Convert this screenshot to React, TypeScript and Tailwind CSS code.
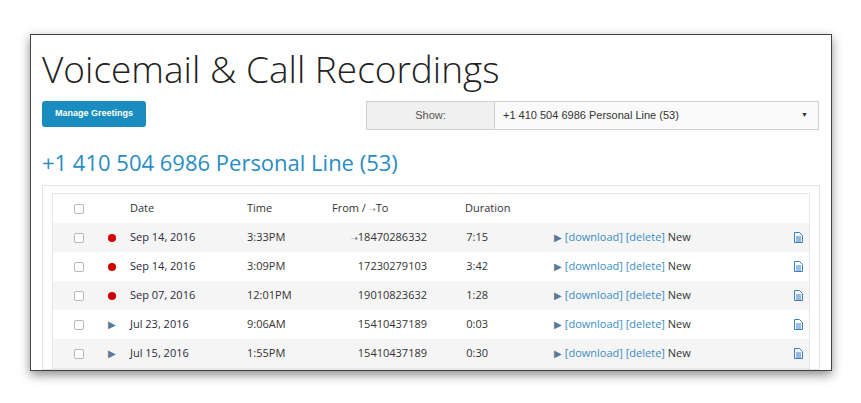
import React from "react";

const rows = [
  { rec: true, date: "Sep 14, 2016", time: "3:33PM", num: "18470286332", out: true, dur: "7:15", shade: true },
  { rec: true, date: "Sep 14, 2016", time: "3:09PM", num: "17230279103", out: false, dur: "3:42", shade: false },
  { rec: true, date: "Sep 07, 2016", time: "12:01PM", num: "19010823632", out: false, dur: "1:28", shade: true },
  { rec: false, date: "Jul 23, 2016", time: "9:06AM", num: "15410437189", out: false, dur: "0:03", shade: false },
  { rec: false, date: "Jul 15, 2016", time: "1:55PM", num: "15410437189", out: false, dur: "0:30", shade: true },
];

function Box() {
  return <span className="block h-[10px] w-[10px] rounded-[2px] border border-[#b8b8b8] bg-white" />;
}

function DocIcon() {
  return (
    <svg width="9" height="11" viewBox="0 0 9 11">
      <path d="M0.5 0.5h5l3 3v7h-8z" fill="none" stroke="#3a7fc4" strokeWidth="1" />
      <path d="M2 5h5M2 7h5M2 9h5" stroke="#3a7fc4" strokeWidth="1" />
    </svg>
  );
}

export default function App() {
  return (
    <div className="h-[403px] w-[861px] bg-white pl-[30px] pt-[34px]" style={{ fontFamily: '"Open Sans", sans-serif' }}>
      <div className="h-[337px] w-[802px] overflow-hidden border border-[#444] bg-white shadow-[0_4px_10px_rgba(0,0,0,0.45)]">
        <div className="px-[11px]">
          <h1 className="mt-[12px] text-[37px] font-light leading-[44px] text-[#222]">Voicemail &amp; Call Recordings</h1>
          <div className="mt-[10px] flex items-start justify-between pr-[1px]">
            <button className="h-[26px] w-[104px] rounded-[3px] bg-[#1a8dc0] text-[9px] font-semibold text-white" style={{ fontFamily: '"Liberation Sans", sans-serif' }}>
              Manage Greetings
            </button>
            <div className="flex h-[29px] w-[453px] border border-[#d0d0d0] text-[11px] text-[#333]" style={{ fontFamily: '"Liberation Sans", sans-serif' }}>
              <div className="flex w-[128px] items-center justify-center border-r border-[#d0d0d0] bg-[#f0f0f0] text-[#555]">Show:</div>
              <div className="flex flex-1 items-center justify-between bg-[#fafafa] pl-[8px] pr-[10px]">
                <span>+1 410 504 6986 Personal Line (53)</span>
                <span className="text-[7px]">▼</span>
              </div>
            </div>
          </div>
          <h2 className="mt-[17px] text-[22px] leading-[30px] text-[#2a8cc4]">+1 410 504 6986 Personal Line (53)</h2>
          <div className="mt-[8px] border border-[#e4e4e4] px-[9px] pt-[7px]">
            <div className="border border-[#e8e8e8] text-[11px] text-[#333]">
              <div className="flex h-[29px] items-center bg-white">
                <div className="flex w-[33px] justify-end pr-[2px]"><Box /></div>
                <div className="w-[44px]" />
                <div className="w-[117px]">Date</div>
                <div className="w-[85px]">Time</div>
                <div className="w-[133px]">From / <span className="text-[8px] text-[#888]">⇢</span>To</div>
                <div className="w-[90px]">Duration</div>
              </div>
              {rows.map((r, i) => (
                <div key={i} className={`flex h-[29px] items-center ${r.shade ? "bg-[#f5f5f5]" : "bg-white"}`}>
                  <div className="flex w-[33px] justify-end pr-[2px]"><Box /></div>
                  <div className="flex w-[44px] justify-center pl-[8px]">
                    {r.rec ? (
                      <span className="block h-[8px] w-[8px] rounded-full bg-[#d40000]" />
                    ) : (
                      <span className="text-[10px] text-[#5a7a9a]">▶</span>
                    )}
                  </div>
                  <div className="w-[117px] text-[#2a2a3a]">{r.date}</div>
                  <div className="w-[85px]">{r.time}</div>
                  <div className="w-[95px] text-right">
                    {r.out && <span className="text-[8px] text-[#666]">⇢</span>}
                    {r.num}
                  </div>
                  <div className="w-[61px] text-right">{r.dur}</div>
                  <div className="ml-[66px] flex-1">
                    <span className="text-[10px] text-[#5a7a9a]">▶</span>
                    <span className="text-[#3a8cc4]"> [download] [delete]</span> New
                  </div>
                  <div className="pr-[6px]"><DocIcon /></div>
                </div>
              ))}
            </div>
          </div>
        </div>
      </div>
    </div>
  );
}
